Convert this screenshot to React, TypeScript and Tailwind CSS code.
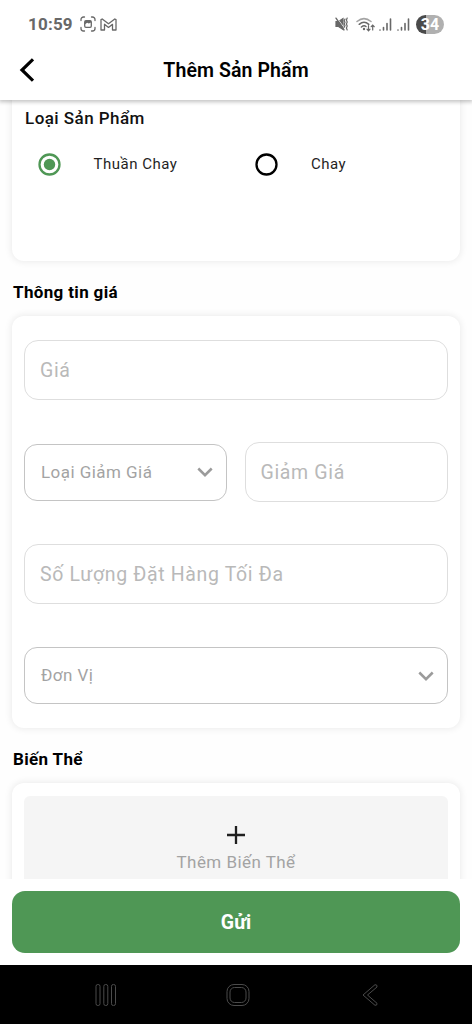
import type { ReactNode } from "react";
import clsx from "clsx";

function StatusBar() {
  return (
    <div className="flex h-12 items-center justify-between px-7 text-[#686868]">
      <div className="flex items-center">
        <span className="w-[45px] whitespace-nowrap text-[17px] font-bold leading-none tracking-[0.2px]">10:59</span>
        <svg viewBox="0 0 16 16" className="ml-[7px] h-4 w-4" fill="none" stroke="currentColor" strokeWidth="1.3" strokeLinecap="round">
          <path d="M1 4.5V3.5A2.5 2.5 0 0 1 3.5 1h1M11.5 1h1A2.5 2.5 0 0 1 15 3.5v1M15 11.5v1a2.5 2.5 0 0 1-2.5 2.5h-1M4.5 15h-1A2.5 2.5 0 0 1 1 12.5v-1" />
          <rect x="4.7" y="4.7" width="6.6" height="6.6" rx="1.2" />
          <path d="M5 8.2l2.2-1.4 1.6.8L11 6.4V5H5z" fill="currentColor" stroke="none" />
        </svg>
        <svg viewBox="0 0 17 13" className="ml-[4px] h-[13px] w-[17px]" fill="none" stroke="currentColor" strokeWidth="1.3" strokeLinejoin="round">
          <path d="M1 12V1.6L2.2 1 8.5 5.8 14.8 1l1.2.6V12h-3.5V6.3L8.5 9.4 4.5 6.3V12z" />
        </svg>
      </div>
      <div className="flex items-center">
        <svg viewBox="0 0 14 14" className="h-3.5 w-3.5" fill="none" stroke="currentColor" strokeWidth="1.2" strokeLinecap="round">
          <path d="M2 4.5h2.5L9 1.5v11L4.5 9.5H2z" fill="currentColor" />
          <path d="M3.2 1.2L10.4 11" stroke="#fff" strokeWidth="0.8" />
          <path d="M2 1.2L10 12.8" strokeWidth="1.4" />
          <path d="M11 2l-.8 1.700.8 1.6-.8 1.7.8 1.6-.8 1.7M13.200 1l-.8 2 .8 2-.8 2 .8 2-.8 2 .8 2" />
        </svg>
        <svg viewBox="0 0 19 15" className="ml-[8px] h-[15px] w-[19px]" fill="none" stroke="currentColor" strokeWidth="1.5" strokeLinecap="round">
          <path d="M1 4.5Q8 -1.3 15 4.5" opacity=".6" />
          <path d="M3.2 7.3Q8 3.3 12.8 7.3" />
          <path d="M5.4 10Q8 8 10 9.5" />
          <circle cx="8" cy="12" r="1.2" fill="currentColor" stroke="none" />
          <path d="M12.5 8.5v5M11 12.2l1.5 1.6 1.5-1.6M16.7 13V8.3M15.2 9.7l1.5-1.6 1.5 1.6" strokeWidth="1.2" />
        </svg>
        <SignalIcon className="ml-[4px]" />
        <SignalIcon className="ml-[5px]" />
        <div className="ml-[6px] flex h-[19px] w-7 items-center justify-center rounded-full bg-linear-to-r from-[#4a4a4a] from-34% to-[#b0b0b0] to-34% pt-0.5 text-base font-bold leading-none text-white">
          34
        </div>
      </div>
    </div>
  );
}

function SignalIcon({ className }: { className?: string }) {
  return (
    <svg viewBox="0 0 13 13" className={clsx("h-[13px] w-[13px]", className)} fill="none" stroke="currentColor" strokeWidth="1.6" strokeLinecap="round">
      <path d="M1 12v.1M4.500 9.5V12M8 5.5V12M11.5 1V12" />
    </svg>
  );
}

function Header() {
  return (
    <header className="relative z-10 h-[100px] shrink-0 bg-white shadow-[0_1px_4px_1px_rgba(0,0,0,0.24)]">
      <StatusBar />
      <div className="flex h-11 items-center">
        <button aria-label="Back" className="ml-[18px] w-4">
          <svg viewBox="0 0 16 24" className="h-6 w-4" fill="none" stroke="#000" strokeWidth="3.2">
            <path d="M15 1.3L4 12l11 10.7" />
          </svg>
        </button>
        <h1 className="flex-1 pr-[34px] pt-0.5 text-center text-[19.5px] font-semibold leading-none tracking-[0.1px] text-black">
          Thêm Sản Phẩm
        </h1>
      </div>
    </header>
  );
}

function Card({ className, children }: { className?: string; children: ReactNode }) {
  return (
    <section className={clsx("rounded-xl bg-white px-3 shadow-[0_0_7px_1px_rgba(0,0,0,0.08)]", className)}>
      {children}
    </section>
  );
}

function Radio({ label, checked = false }: { label: string; checked?: boolean }) {
  return (
    <label className={clsx("flex w-[217.5px] shrink-0 items-center", checked ? "text-[#4f9755]" : "text-black")}>
      <svg viewBox="0 0 23 23" className="h-[23px] w-[23px]" fill="none" stroke="currentColor" strokeWidth="2.3">
        <circle cx="11.5" cy="11.5" r="10" />
        {checked && <circle cx="11.5" cy="11.5" r="5.7" fill="currentColor" stroke="none" />}
      </svg>
      <span className="ml-[33px] whitespace-nowrap text-[15px] leading-none tracking-[0.5px] text-[#1f1f1f]">{label}</span>
    </label>
  );
}

function TextField({ label }: { label: string }) {
  return (
    <div className="flex h-[60px] flex-1 items-center rounded-[14px] border border-[#dedede] px-[15px] pt-0.5 text-[19.5px] leading-none tracking-[0.65px] text-[#b9b9b9]">
      {label}
    </div>
  );
}

function SelectField({ label }: { label: string }) {
  return (
    <div className="flex h-[57px] flex-1 items-center justify-between rounded-[13px] border border-[#c4c4c4] pl-4 pr-[13px] text-[17px] leading-none tracking-[0.45px] text-[#a3a3a3]">
      {label}
      <svg viewBox="0 0 16 10" className="h-2.5 w-4" fill="none" stroke="#9b9b9b" strokeWidth="2.5">
        <path d="M1.3 1.500L8 8.2l6.7-6.7" />
      </svg>
    </div>
  );
}

function SectionTitle({ children }: { children: ReactNode }) {
  return (
    <h2 className="flex h-[55px] items-center pl-px pt-[7px] text-[17px] font-bold leading-none tracking-[0.35px] text-black">
      {children}
    </h2>
  );
}

function NavigationBar() {
  return (
    <nav className="flex h-[59px] shrink-0 items-center bg-black text-[#4b4b4b]">
      <svg viewBox="0 0 22 24" className="ml-[95px] h-6 w-[22px]" fill="none" stroke="currentColor" strokeWidth="1">
        <rect x="1" y="1.5" width="4" height="21" rx="1.8" />
        <rect x="8.8" y="1.5" width="4" height="21" rx="1.8" />
        <rect x="16.5" y="1.5" width="4" height="21" rx="1.8" />
      </svg>
      <svg viewBox="0 0 24 24" className="ml-[109px] h-6 w-6" fill="none" stroke="currentColor" strokeWidth="1">
        <rect x="1" y="1.5" width="22" height="21" rx="7" />
        <rect x="4" y="4.5" width="16" height="15" rx="4.5" />
      </svg>
      <svg viewBox="0 0 16 24" className="ml-[112px] h-6 w-4" fill="none" stroke="currentColor" strokeWidth="1" strokeLinejoin="round">
        <path d="M13 1.7L1 12l12 10.3q2.5.2 2-2L5.5 12 15 4Q15.5 1.5 13 1.7z" />
      </svg>
    </nav>
  );
}

export default function App() {
  return (
    <div className="flex h-[1024px] w-[472px] flex-col overflow-hidden bg-[#fefefe] font-[Roboto,sans-serif]">
      <Header />

      <main className="h-[779px] shrink-0 overflow-hidden px-3">
        <Card className="-mt-4 h-[177px] pt-[26px]">
          <h3 className="pl-px text-[17px] font-medium leading-4 tracking-[0.45px] text-[#111]">Loại Sản Phẩm</h3>
          <div className="mt-[27px] flex pl-[13.5px]">
            <Radio label="Thuần Chay" checked />
            <Radio label="Chay" />
          </div>
        </Card>

        <SectionTitle>Thông tin giá</SectionTitle>
        <Card className="flex h-[412px] flex-col pt-6">
          <div className="flex">
            <TextField label="Giá" />
          </div>
          <div className="mt-[42px] flex items-center gap-[18px]">
            <SelectField label="Loại Giảm Giá" />
            <TextField label="Giảm Giá" />
          </div>
          <div className="mt-[42px] flex">
            <TextField label="Số Lượng Đặt Hàng Tối Đa" />
          </div>
          <div className="mt-[43px] flex">
            <SelectField label="Đơn Vị" />
          </div>
        </Card>

        <SectionTitle>Biến Thể</SectionTitle>
        <Card className="h-40 pt-[13px]">
          <button className="flex h-32 w-full flex-col items-center rounded-md bg-[#f5f5f5] pt-[30px]">
            <svg viewBox="0 0 18 18" className="h-[18px] w-[18px]" stroke="#1f1f1f" strokeWidth="2.3">
              <path d="M9 0v18M0 9h18" />
            </svg>
            <span className="mt-[10px] text-[17px] leading-none tracking-[0.45px] text-[#a3a3a3]">Thêm Biến Thể</span>
          </button>
        </Card>
      </main>

      <footer className="h-[86px] shrink-0 bg-white px-3 pt-3">
        <button className="h-[62px] w-full rounded-[13px] bg-[#4f9755] pt-0.5 text-[19.5px] font-bold leading-none text-white">Gửi</button>
      </footer>

      <NavigationBar />
    </div>
  );
}
